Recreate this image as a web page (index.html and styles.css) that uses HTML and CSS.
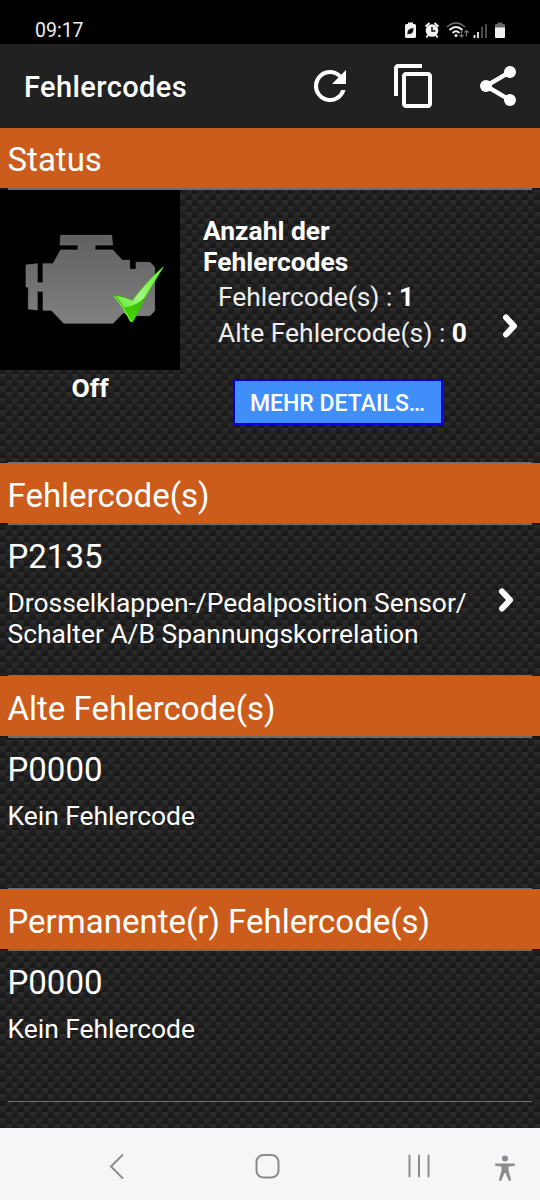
FILE: index.html
```
<!DOCTYPE html>
<html lang="de">
<head>
    <meta charset="UTF-8">
    <meta name="viewport" content="width=device-width, initial-scale=1.0">
    <title>Fehlercodes</title>
    <link rel="stylesheet" href="styles.css">
</head>
<body>
    <div class="statusbar">
        <span class="clock">09:17</span>
        <svg class="status-icons" width="104" height="20" viewBox="0 0 104 20">
            <path d="M3.500 3H5V1.500h5V3h1.500q1.500 0 1.500 1.500v11q0 1.500-1.500 1.500h-8q-1.500 0-1.500-1.500v-11Q2 3 3.500 3z" fill="#f2f2f2"/>
            <path d="M4.500 11.500q0-3.800 6-4.500q0 6-4 6l-1-.3l-1 1.300z" fill="#111"/>
            <circle cx="29" cy="9.500" r="6.300" fill="#f2f2f2"/>
            <path d="M22.500 5.500l4-3.500M35.500 5.500l-4-3.500M25 14l-1.500 2.500M33 14l1.500 2.500" stroke="#f2f2f2" stroke-width="1.800"/>
            <path d="M29 6v4h3.500" fill="none" stroke="#111" stroke-width="1.500"/>
            <path d="M44 6q9-8 18 0" fill="none" stroke="#777" stroke-width="1.600"/>
            <path d="M46.500 9q6.500-6 13 0M49.500 12q3.500-3.500 7 0" fill="none" stroke="#f2f2f2" stroke-width="1.800"/>
            <circle cx="53" cy="14.500" r="1.500" fill="#f2f2f2"/>
            <path d="M58.500 10v6m-2-2l2 2l2-2M63.500 15.500v-6m-2 2l2-2l2 2" fill="none" stroke="#777" stroke-width="1.200"/>
            <path d="M71.500 17v-3M75 17v-6" stroke="#f2f2f2" stroke-width="1.800"/>
            <path d="M79 17V6M83 17V3" stroke="#666" stroke-width="1.500"/>
            <path d="M92 7V4q0-1 1-1h1.500V1.500h5V3h1.500q1 0 1 1v3z" fill="#666"/>
            <path d="M92 6.500h10V16q0 1-1 1h-8q-1 0-1-1z" fill="#f2f2f2"/>
        </svg>
    </div>

    <div class="appbar">
        <h1>Fehlercodes</h1>
        <div class="actions">
            <svg width="48" height="48" viewBox="0 0 24 24" fill="#fff">
                <path d="M17.650 6.350A7.960 7.960 0 0 0 12 4a8 8 0 1 0 7.730 10h-2.080A6 6 0 1 1 12 6c1.660 0 3.140.690 4.220 1.780L13 11h7V4z"/>
            </svg>
            <svg width="48" height="48" viewBox="0 0 24 24" fill="#fff">
                <path d="M16 1H4c-1.100 0-2 .9-2 2v14h2V3h12V1zm3 4H8c-1.100 0-2 .9-2 2v14c0 1.100.9 2 2 2h11c1.100 0 2-.9 2-2V7c0-1.100-.9-2-2-2zm0 16H8V7h11v14z"/>
            </svg>
            <svg width="48" height="48" viewBox="0 0 24 24" fill="#fff">
                <path d="M18 5L6 12l12 7" fill="none" stroke="#fff" stroke-width="2.200"/>
                <circle cx="18" cy="5" r="3"/>
                <circle cx="6" cy="12" r="3"/>
                <circle cx="18" cy="19" r="3"/>
            </svg>
        </div>
    </div>

    <div class="list">
        <h2 class="first">Status</h2>
        <div class="row status-row">
            <div class="mil">
                <svg width="180" height="180" viewBox="0 30 540 540">
                    <defs>
                        <linearGradient id="metal" x1="0" y1="0" x2="0" y2="1">
                            <stop offset="0" stop-color="#606060"/>
                            <stop offset="1" stop-color="#808080"/>
                        </linearGradient>
                        <linearGradient id="green" x1="0" y1="0" x2="0" y2="1">
                            <stop offset="0" stop-color="#4eea12"/>
                            <stop offset="0.600" stop-color="#38b800"/>
                            <stop offset="1" stop-color="#46dc00"/>
                        </linearGradient>
                        <linearGradient id="shine" x1="1" y1="0" x2="0" y2="1">
                            <stop offset="0" stop-color="#5cf51e"/>
                            <stop offset="0.600" stop-color="#a4f584"/>
                            <stop offset="1" stop-color="#66e834"/>
                        </linearGradient>
                    </defs>
                    <rect y="30" width="540" height="540" fill="#000"/>
                    <path d="M182 166H335L338 195H285V210H338L367 241H389V268H408V247H450L464 262V392L450 407H374L340 430H191L154 391H129V334H112V390L85 387V322L78 321V255L112 251V308H129V251H159L182 210H234V195H180Z" fill="url(#metal)" stroke="#8a8a8a" stroke-width="1.500"/>
                    <path d="M370 399L340 430H360L385 407Z" fill="#000"/>
                    <path d="M340 346Q372 348 397 360Q443 300 493 257Q446 333 399 426H391Q369 382 340 346Z" fill="url(#green)"/>
                    <path d="M348 348Q376 352 397 362Q443 303 489 262Q460 306 434 352Q412 378 373 383Q363 367 348 348Z" fill="url(#shine)"/>
                    <path d="M342 348Q371 382 393 424" fill="none" stroke="#8cf55c" stroke-width="3"/>
                </svg>
                <span>Off</span>
            </div>
            <div class="summary">
                <h3>Anzahl der Fehlercodes</h3>
                <p>Fehlercode(s) : <b>1</b></p>
                <p>Alte Fehlercode(s) : <b>0</b></p>
                <button>MEHR DETAILS…</button>
            </div>
            <svg class="chevron" width="20" height="28" viewBox="0 0 20 28">
                <path d="M5 5.500l8 8.500l-8 8.500" />
            </svg>
        </div>

        <h2>Fehlercode(s)</h2>
        <div class="row">
            <div class="code">
                <h4>P2135</h4>
                <p>Drosselklappen-/Pedalposition Sensor/<br>Schalter A/B Spannungskorrelation</p>
            </div>
            <svg class="chevron" width="20" height="28" viewBox="0 0 20 28">
                <path d="M5 5.500l8 8.500l-8 8.500" />
            </svg>
        </div>

        <h2>Alte Fehlercode(s)</h2>
        <div class="row">
            <div class="code">
                <h4>P0000</h4>
                <p>Kein Fehlercode</p>
            </div>
        </div>

        <h2>Permanente(r) Fehlercode(s)</h2>
        <div class="row">
            <div class="code">
                <h4>P0000</h4>
                <p>Kein Fehlercode</p>
            </div>
        </div>
    </div>

    <div class="navbar">
        <svg width="540" height="72" viewBox="0 0 540 72" fill="none" stroke="#8c8c8c" stroke-width="2">
            <path d="M122.500 27L111 38.500L122.500 50" stroke-linecap="round"/>
            <rect x="256.500" y="27" width="22" height="22.500" rx="7"/>
            <path d="M409.500 27.500v21M419 27.500v21M428.500 27.500v21" stroke-linecap="round"/>
            <g fill="#8c8c8c" stroke="none">
                <circle cx="505" cy="30.500" r="3"/>
                <path d="M496 35.500h18q1 0 1 1t-1 1.500l-5.500.5v4l2.500 9q0 2-2 1.500l-3.500-8h-1l-3.500 8q-2 .5-2-1.500l2.500-9v-4l-5.500-.5q-1-.5-1-1.500t1-1z"/>
            </g>
        </svg>
    </div>
</body>
</html>
```

FILE: styles.css
```
* {
    box-sizing: border-box;
    margin: 0;
    padding: 0;
}
body {
    width: 540px;
    height: 1200px;
    display: flex;
    flex-direction: column;
    font-family: Roboto, sans-serif;
    color: #fff;
    background: #000;
    overflow: hidden;
}
svg {
    display: block;
    flex-shrink: 0;
}
.statusbar {
    height: 44px;
    display: flex;
    align-items: center;
    justify-content: space-between;
    padding: 17px 33px 0 35px;
}
.clock {
    font-size: 19.5px;
    line-height: 28px;
    color: #eee;
}
.appbar {
    height: 84px;
    display: flex;
    align-items: center;
    justify-content: space-between;
    padding: 0 18px 0 24px;
    background: #212121;
}
.appbar h1 {
    font-size: 29px;
    font-weight: 500;
    letter-spacing: 0.4px;
    padding-top: 1px;
}
.actions {
    display: flex;
    gap: 36px;
}
/* carbon fibre: 6px checks, each one fading to dark at the bottom */
.list {
    height: 1000px;
    background-image:
        linear-gradient(rgba(0, 0, 0, 0), rgba(0, 0, 0, 0.28)),
        conic-gradient(#2e2e2e 25%, #202020 0 50%, #2e2e2e 0 75%, #202020 0);
    background-size: 6px 6px, 12px 12px;
}
h2 {
    height: 60px;
    padding-left: 7.5px;
    font-size: 33px;
    font-weight: 400;
    line-height: 66px;
    background: #cb5c1b;
}
h2.first {
    line-height: 64px;
}
.row {
    height: 153px;
    display: flex;
    align-items: flex-start;
    border-style: solid;
    border-width: 2px 0 1px;
    border-image: linear-gradient(90deg, #191919 8px, #6c6c6c 8px 532px, #191919 532px) 2 0 1;
}
.status-row {
    height: 275px;
}
.mil {
    width: 180px;
    text-align: center;
}
.mil span {
    display: block;
    font-size: 26.5px;
    font-weight: 700;
    line-height: 36px;
}
.summary {
    width: 295px;
    padding: 26px 0 0 23px;
}
.summary h3 {
    width: 170px;
    font-size: 26.4px;
    line-height: 31px;
    margin-bottom: 1px;
}
.summary p {
    padding-left: 15px;
    font-size: 26.4px;
    line-height: 36px;
    color: #eee;
    white-space: nowrap;
}
.summary b {
    color: #fff;
}
button {
    display: block;
    width: 210px;
    height: 46px;
    margin: 28px 0 0 29.5px;
    padding-top: 2px;
    border: 2px solid #0000d8;
    background: #3f8efa;
    color: #fff;
    font: 500 23px Roboto, sans-serif;
}
.chevron {
    fill: none;
    stroke: #fff;
    stroke-width: 6;
    stroke-linecap: round;
    stroke-linejoin: round;
}
.status-row .chevron {
    margin: 122px 0 0 26px;
}
.code {
    width: 493px;
    padding-left: 7.5px;
}
.code h4 {
    font-size: 33px;
    font-weight: 400;
    line-height: 40px;
    padding-top: 12px;
}
.code p {
    font-size: 26.4px;
    line-height: 31px;
    padding-top: 11px;
    white-space: nowrap;
}
.code + .chevron {
    margin: 61px 0 0 4px;
}
.navbar {
    height: 72px;
    background: #f6f6f8;
}
```
